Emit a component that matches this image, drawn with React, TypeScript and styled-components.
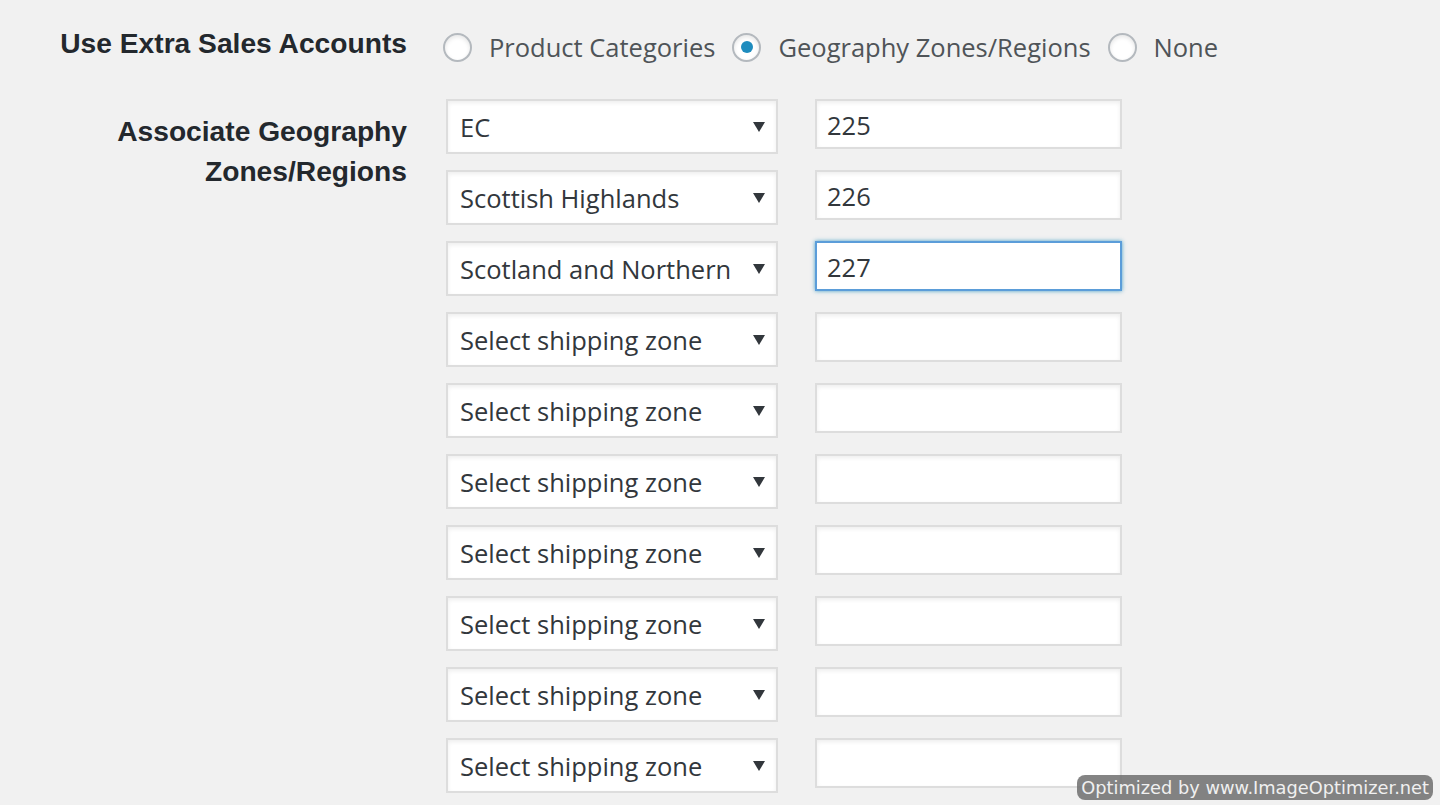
import styled, { createGlobalStyle } from "styled-components";

const GlobalStyle = createGlobalStyle`
	html, body {
		margin: 0;
		background: #f1f1f1;
	}
	body {
		font-family: "Open Sans", "Noto Sans", sans-serif;
		overflow: hidden;
	}
`;

const Page = styled.div`
	position: relative;
	min-height: 805px;
	padding-top: 23px;
	box-sizing: border-box;
`;

const FormRow = styled.div<{ $top?: number }>`
	display: grid;
	grid-template-columns: 407px 1fr;
	column-gap: 36px;
	margin-top: ${({ $top }) => $top ?? 0}px;
`;

const RowLabel = styled.div<{ $offset?: number }>`
	font-family: "Liberation Sans", Arial, sans-serif;
	font-weight: bold;
	font-size: 28.2px;
	line-height: 40px;
	color: #23282d;
	text-align: right;
	padding-left: 56px;
	padding-top: ${({ $offset }) => $offset ?? 0}px;
`;

const RadioGroup = styled.div`
	display: flex;
	align-items: center;
	gap: 17px;
	height: 40px;
	margin-top: 4px;
`;

const RadioOption = styled.label`
	display: flex;
	align-items: center;
	gap: 17px;
	font-size: 25.5px;
	color: #4f5458;
	white-space: nowrap;
`;

const RadioCircle = styled.span<{ $checked?: boolean }>`
	display: flex;
	align-items: center;
	justify-content: center;
	width: 29px;
	height: 29px;
	box-sizing: border-box;
	border-radius: 50%;
	border: 2px solid #b4b9be;
	background: #fff;
	box-shadow: inset 0 2px 4px rgba(0, 0, 0, 0.1);
	&::after {
		content: "";
		display: ${({ $checked }) => ($checked ? "block" : "none")};
		width: 12px;
		height: 12px;
		border-radius: 50%;
		background: #1e8cbe;
	}
`;

const Fields = styled.div`
	display: flex;
	flex-direction: column;
	gap: 16px;
	padding-left: 3px;
`;

const FieldRow = styled.div`
	display: flex;
	align-items: flex-start;
	gap: 37px;
`;

const SelectBox = styled.div`
	display: flex;
	align-items: center;
	justify-content: space-between;
	width: 332px;
	height: 55px;
	box-sizing: border-box;
	padding: 0 11px 0 12px;
	background: #fff;
	border: 2px solid #ddd;
	box-shadow: inset 0 2px 4px rgba(0, 0, 0, 0.07);
	font-size: 25.5px;
	color: #32373c;
	white-space: nowrap;
`;

const TextInput = styled.input<{ $focused?: boolean }>`
	width: 307px;
	height: 50px;
	box-sizing: border-box;
	padding: 2px 10px 0;
	margin: 0;
	background: #fff;
	border: 2px solid ${({ $focused }) => ($focused ? "#5b9dd9" : "#ddd")};
	box-shadow: ${({ $focused }) =>
		$focused
			? "0 0 4px rgba(30, 140, 190, 0.8)"
			: "inset 0 2px 4px rgba(0, 0, 0, 0.07)"};
	font-family: "Open Sans", "Noto Sans", sans-serif;
	font-size: 25.5px;
	color: #32373c;
	outline: none;
`;

const Watermark = styled.div`
	position: absolute;
	right: 7px;
	top: 775px;
	height: 25px;
	padding: 0 4px;
	border-radius: 8px;
	background: rgba(110, 110, 110, 0.85);
	color: #f0f0f0;
	font-family: "DejaVu Sans", Verdana, sans-serif;
	font-size: 17.8px;
	line-height: 25px;
	white-space: nowrap;
`;

const Arrow = () => (
	<svg width="12" height="10" viewBox="0 0 12 10">
		<polygon points="0,0 12,0 6,10" fill="#32373c" />
	</svg>
);

const zones = [
	{ zone: "EC", account: "225" },
	{ zone: "Scottish Highlands", account: "226" },
	{ zone: "Scotland and Northern", account: "227", focused: true },
	...Array.from({ length: 7 }, () => ({ zone: "Select shipping zone", account: "" })),
];

const options = [
	{ label: "Product Categories", checked: false },
	{ label: "Geography Zones/Regions", checked: true },
	{ label: "None", checked: false },
];

const App = () => {
	return (
		<Page>
			<GlobalStyle />
			<FormRow>
				<RowLabel>Use Extra Sales Accounts</RowLabel>
				<RadioGroup>
					{options.map((o) => (
						<RadioOption key={o.label}>
							<RadioCircle $checked={o.checked} />
							{o.label}
						</RadioOption>
					))}
				</RadioGroup>
			</FormRow>
			<FormRow $top={32}>
				<RowLabel $offset={12}>Associate Geography Zones/Regions</RowLabel>
				<Fields>
					{zones.map((z, i) => (
						<FieldRow key={i}>
							<SelectBox>
								<span>{z.zone}</span>
								<Arrow />
							</SelectBox>
							<TextInput
								type="text"
								defaultValue={z.account}
								$focused={"focused" in z && z.focused}
							/>
						</FieldRow>
					))}
				</Fields>
			</FormRow>
			<Watermark>Optimized by www.ImageOptimizer.net</Watermark>
		</Page>
	);
};

export default App;
